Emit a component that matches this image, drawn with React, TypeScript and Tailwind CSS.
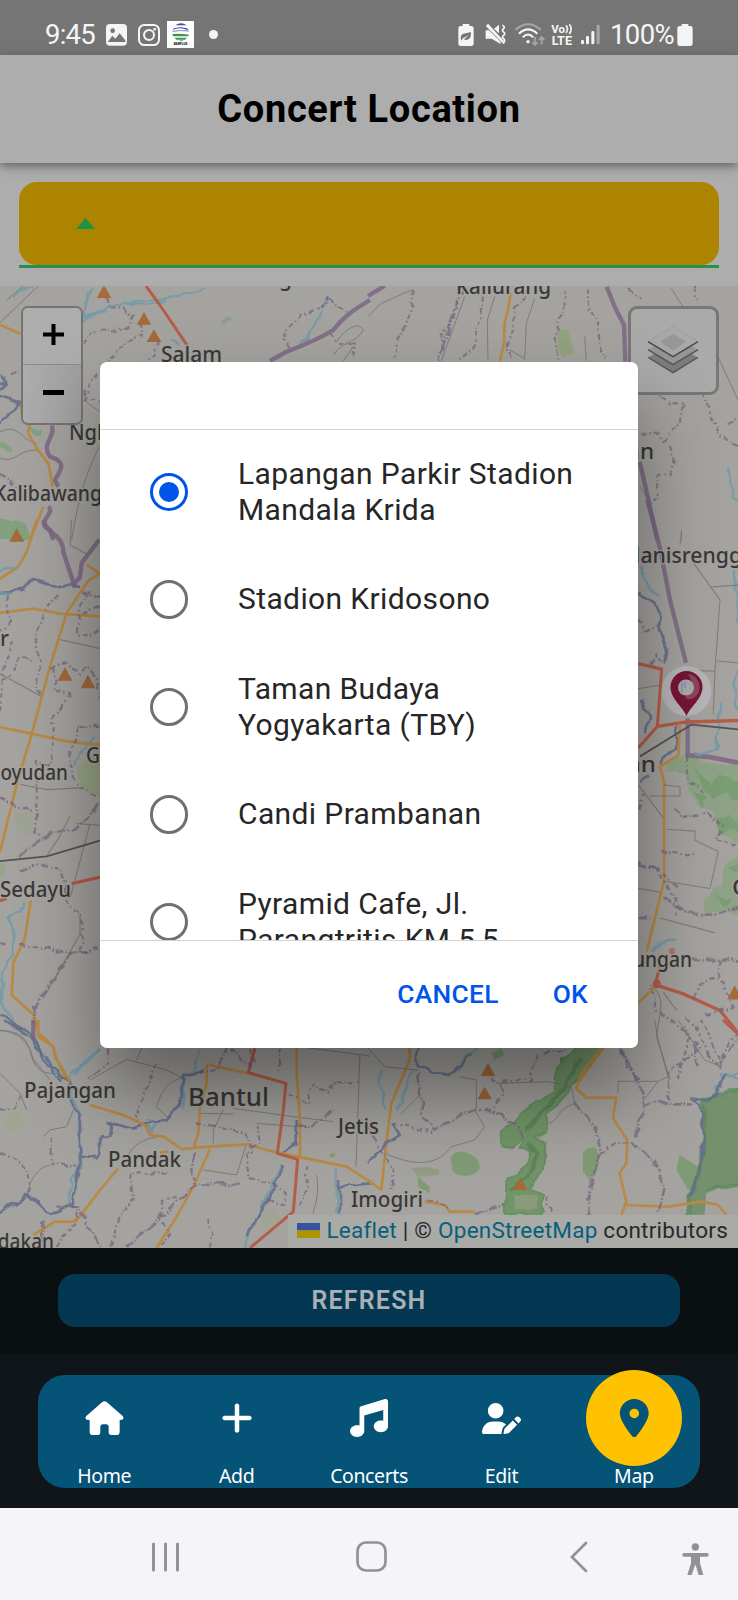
import React from "react";
import { FaMusic, FaPlus, FaUserPen, FaLocationDot } from "react-icons/fa6";

type Kind = "road" | "red" | "river" | "stream" | "edge" | "dash" | "wide" | "thin" | "rail";

const strokes: Record<Kind, { stroke: string; w: number; dash?: string; o?: number; wavy?: boolean }> = {
  road: { stroke: "#b98a45", w: 8 },
  red: { stroke: "#b65d49", w: 9 },
  river: { stroke: "#656f8c", w: 8, o: 0.9, wavy: true },
  stream: { stroke: "#6f9aa9", w: 7, o: 0.85, wavy: true },
  edge: { stroke: "#77637f", w: 8, dash: "26 6 5 6", o: 0.7, wavy: true },
  dash: { stroke: "#77647d", w: 6.5, dash: "16 8 5 8", o: 0.72, wavy: true },
  wide: { stroke: "#7d6784", w: 13, o: 0.85 },
  thin: { stroke: "#7b7876", w: 3, o: 0.9 },
  rail: { stroke: "#555351", w: 5 },
};

function Line({ k, d }: { k: Kind; d: string }) {
  const s = strokes[k];
  return (
    <path d={d} fill="none" stroke={s.stroke} strokeWidth={s.w} strokeDasharray={s.dash} opacity={s.o} strokeLinejoin="round" filter={s.wavy ? "url(#wavy)" : undefined} />
  );
}

function Peaks({ at }: { at: [number, number][] }) {
  return (
    <>
      {at.map(([x, y]) => (
        <path key={`${x}-${y}`} d={`M${x - 22} ${y + 18}L${x} ${y - 20}L${x + 22} ${y + 18}Z`} fill="#a5693a" />
      ))}
    </>
  );
}

function Label({ x, y, w, size = 22.5, children }: { x: number; y: number; w: number; size?: number; children: string }) {
  return (
    <text x={x} y={y} textLength={w} lengthAdjust="spacingAndGlyphs" fontSize={size} fontWeight="500" fill="#3a3938" stroke="#a6a4a0" strokeWidth="2.5" paintOrder="stroke" className="font-['Noto_Sans',sans-serif]">
      {children}
    </text>
  );
}

function MapCanvas() {
  return (
    <svg viewBox="0 286 738 962" className="block h-full w-full">
      <defs>
        <filter id="wavy" filterUnits="userSpaceOnUse" x="-20" y="-20" width="1160" height="1620">
          <feTurbulence type="fractalNoise" baseFrequency="0.03" numOctaves="1" seed="4" />
          <feDisplacementMap in="SourceGraphic" scale="26" xChannelSelector="R" yChannelSelector="G" />
        </filter>
      </defs>
      <rect y="286" width="738" height="962" fill="#a5a39f" />

      <g transform="translate(0 280) scale(.33333)">
        <path filter="url(#wavy)" d="M0 480L20 495L40 505L30 515L0 500ZM90 445L130 450L120 468L95 460ZM665 128L692 108L694 122L672 136ZM0 715L40 725L75 745L95 780L0 780Z" fill="#83a17c" />
        <Line k="thin" d="M0 128L115 18M70 18L20 60M0 455C60 430 60 480 110 490M0 535C50 550 50 510 110 510M297 500C270 560 240 620 215 780M250 360L300 395" />
        <Line k="stream" d="M40 50L60 30L100 22M275 22L255 75L250 110L320 82L380 70L440 62L520 52L620 26M370 70L440 74L500 62M250 130L265 110L320 90M508 178L538 194M965 95C940 160 920 170 900 200M990 50L960 90" />
        <Line k="road" d="M0 134L62 162M60 360L66 400M90 420L85 460L110 505L145 550L158 620M130 680L90 780" />
        <Line k="red" d="M438 18L470 62L500 105L564 200" />
        <Line k="wide" d="M1110 60C1060 90 1030 110 1000 150C960 175 900 200 860 215L810 243M155 436C170 470 120 490 150 530C195 545 190 560 165 600L175 620M145 680C170 700 100 730 150 750L160 780" />
        <Line k="river" d="M0 285L20 310L0 330M0 350L60 370L30 400L0 430M22 305L0 312" />
        <Line k="dash" d="M325 50L330 85L370 85L400 105L385 135L350 155L280 150L250 190M420 125L425 170L380 185L340 225L310 270L270 310L260 360M470 180L465 225L440 235M990 55L1010 80L1040 92M990 45L960 90L900 105L865 150L850 185L875 210M990 160L1010 185L1065 190L1060 230M30 290L60 270M0 580L30 600L50 620M250 330L265 355L300 365" />
        <Line k="thin" d="M1010 185C1050 130 1080 130 1090 150C1070 190 1030 180 1000 225M1060 200L1030 243" />
        <Peaks at={[[312, 36], [432, 116], [462, 168], [50, 765]]} />
      </g>

      <g transform="translate(368 280) scale(.33333)">
        <path d="M568 150L600 150L618 218L585 232L570 210Z" fill="#8da277" opacity=".8" />
        <Line k="wide" d="M0 48L50 18M716 20L740 80L768 135L772 245M815 545L830 610L850 700L868 780" />
        <Line k="road" d="M428 40L420 90L410 130L408 190L396 243" />
        <Line k="dash" d="M135 30L128 90L110 150L88 180L80 243M285 30L265 80L260 110L225 160L215 243M345 50L340 110L320 150L320 200L270 243M475 50L445 80L435 130L420 210L430 243M590 30L590 70L570 120L560 180L575 240M660 25L660 80L690 130L695 200L710 240M780 30L820 60M980 20L990 60M820 465L870 460L890 480L935 430L945 370L905 370L870 340M905 500L920 540L910 580L870 590L865 650L850 670M1000 340L1015 380L1050 460L1110 500M1080 430L1110 410" />
        <Line k="edge" d="M268 60L215 235" />
        <Line k="thin" d="M0 110L40 70L130 30M290 50L250 160L220 243M380 50L358 120L360 243M500 55L475 130L470 240M425 210L470 235M650 170L655 243M910 25L945 80M1050 230L1110 360M815 620L850 670M940 750V780" />
        <Line k="stream" d="M1080 570L1090 620L1108 665" />
      </g>

      <g transform="translate(0 520) scale(.33333 .35714)">
        <path filter="url(#wavy)" d="M0 0L70 10L85 40L40 60L0 35Z" fill="#83a17c" />
        <path filter="url(#wavy)" d="M0 960L20 962L15 990L0 1000ZM230 690L300 650V770L240 750Z" fill="#98a487" />
        <path filter="url(#wavy)" d="M40 820L100 825L95 880L50 870Z" fill="#98a487" opacity=".4" />
        <Line k="road" d="M110 0L80 90L55 130L0 165M300 150L265 170L200 260L150 410L95 600L50 740L0 930M0 260L100 248L180 262L300 270M0 580L95 598L190 618L300 630M260 125L300 150M92 1065L75 1170L40 1240L35 1330L100 1385L115 1435L160 1475L170 1510L200 1568" />
        <Line k="red" d="M215 1018L300 1000M0 1066L20 1060" />
        <Line k="river" d="M0 205L70 195L100 165L180 185L240 190M0 1380L60 1420L95 1445L150 1530L180 1568" />
        <Line k="stream" d="M0 145L50 130M70 1070L60 1100L25 1110L40 1150L40 1200L10 1270L0 1350L50 1410M300 1480L220 1550M0 205L35 208M290 605L245 645L220 690" />
        <Line k="wide" d="M130 0C140 40 190 40 190 90L215 160L225 190M298 55L245 120L240 160L215 185" />
        <Line k="dash" d="M180 210L130 260L105 330L120 400L110 460L120 500M60 380L30 440L0 450M20 210L30 290L0 310M270 200L240 240L230 320L280 325L300 300M70 380L100 400M150 410L200 400L240 430L260 410L285 440L300 500M160 410L165 480L210 490L160 560L150 690L110 680L110 780L105 870L130 890M240 580L300 575M240 580L210 640L215 720L240 750L300 775M0 780L95 820M60 990L110 960L190 985L200 1070L240 1100L250 1180L235 1210M60 1190L140 1200L240 1215L300 1200M20 1190L0 1190M40 340L10 420L0 540M250 200L300 215M250 260L300 240" />
        <Line k="edge" d="M60 940L150 880L240 860L300 790M100 1370L150 1300L210 1215L270 1210M100 1360L100 1410" />
        <Line k="thin" d="M215 0L210 70L260 95M180 335L300 360M0 430L125 495M60 740L140 755L240 750M270 850L210 1060M210 830L170 900L140 940M230 850L300 855M240 1110V1160L130 1340M0 1430C50 1430 80 1440 100 1510L150 1568" />
        <Line k="rail" d="M0 955L140 942L300 898" />
        <Peaks at={[[50, 43], [195, 432], [264, 453]]} />
      </g>

      <g transform="translate(560 500) scale(.33333 .36995)">
        <path filter="url(#wavy)" d="M330 700L400 690L440 710L550 720V930L520 920L480 895L455 840L420 830L395 800L385 750L320 730ZM550 960L490 980L490 1040L460 1050L440 1080L420 1130L460 1110L550 1120Z" fill="#8aa382" opacity=".85" />
        <path filter="url(#wavy)" d="M400 720L450 770L480 740L550 770V830L500 790L460 810L430 780ZM400 790L440 800L430 830ZM470 860L510 850L550 890L480 900ZM500 990L540 980L530 1010ZM460 1070L520 1080L500 1100Z" fill="#719b6b" opacity=".65" />
        <path filter="url(#wavy)" d="M0 1510L60 1480L120 1490L50 1568H0Z" fill="#66865c" />
        <Line k="wide" d="M262 0L300 130L330 270L355 360L378 440M383 590V690L450 695L534 710" />
        <Line k="stream" d="M240 180L270 240L300 260M515 180L534 260V350M534 460L520 500L534 570M485 545L470 640L470 680L400 690M345 1185L310 1195L275 1220M534 1550L485 1555L490 1568" />
        <Line k="river" d="M235 250L295 290L300 350L325 400L310 445M240 540L270 590L255 625M350 610L345 670L300 710M240 765L270 745" />
        <Line k="red" d="M235 442L305 457L292 612L235 670M292 612L380 600L534 596M300 1260L285 1310L370 1335L480 1380L534 1440" />
        <Line k="road" d="M360 605L355 690L300 720L312 760L312 1030L290 1110L260 1220M130 1480L60 1568" />
        <Line k="rail" d="M240 693L395 607L534 620" />
        <Line k="thin" d="M365 90L360 120M400 170L480 270L465 460L460 580M455 235L534 230M470 435L534 440M235 510L300 500M380 460L465 463M320 890L405 895V920L475 950L450 1050L310 1030M235 770L310 860M235 1050L300 1060M310 770L360 775V800H270M300 1130L465 1170M270 1310C330 1350 290 1400 290 1450L330 1568M310 1330L350 1380" />
        <Line k="dash" d="M235 320L260 350L300 335M270 440L290 420L305 440M345 830L360 860L440 850L490 880L470 920L534 930M300 955L410 955M235 980L290 1000L345 1080L350 1120M310 1010L350 1050M275 1320L290 1380L340 1410L390 1450L350 1568M380 1400L420 1440L440 1500L480 1530L534 1450M440 1390L520 1370L490 1310L470 1290L420 1310L400 1350M475 1240V1290M380 690L390 760L430 790M235 840L250 800" />
        <Line k="edge" d="M235 990L300 1000M310 1080L400 1120L480 1118L534 1100M235 1130L270 1130M395 1240L534 1242M180 1480L235 1568M400 1470L420 1540" />
        <Line k="road" d="M235 1360L285 1315" />
        <circle cx="290" cy="1308" r="12" fill="#b65d49" />
        <circle cx="336" cy="1220" r="9" fill="#b0766a" />
        <Peaks at={[[524, 1332]]} />
      </g>

      <g transform="translate(0 1020) scale(.33333)">
        <path filter="url(#wavy)" d="M10 290L60 270L70 320L20 340ZM780 590L830 560L840 600L790 640Z" fill="#9fa78e" opacity=".7" />
        <Line k="thin" d="M0 30C50 40 70 50 90 90C100 150 130 160 160 160M0 160L60 220L80 270M270 180L380 118L500 150L560 180M410 120L425 84M500 290L470 260C490 190 520 180 570 165M80 530C90 470 120 440 150 435M130 350L150 330L200 320L220 270M640 370V330L670 270M610 450L710 465L740 370M700 265L880 290L1000 305M600 280L700 282M380 415C400 370 430 360 470 350M950 465C960 540 940 560 940 580M925 84L1110 108M770 310L900 320M1080 100L1068 440" />
        <Line k="stream" d="M300 85L240 140L205 180L235 280L245 440L215 480L205 550M440 300L470 310L450 335L430 310M600 84L580 150L550 180L550 260M850 430L800 530L730 684M1010 440V580M130 100L170 170" />
        <Line k="river" d="M15 0L100 60L130 120L205 190L220 260L240 300L240 430L215 550L150 585L85 525L0 580M240 410L290 415C310 390 290 360 310 345C330 360 350 310 320 310C380 310 390 340 430 315L500 300L540 250L550 170L610 150M855 430L820 510L740 650M1015 500L1110 490M850 390L890 370V300M1020 480V580" />
        <Line k="wide" d="M100 0L100 60" />
        <Line k="road" d="M115 0V50L160 80L165 110L210 184M270 255L370 285L435 315L450 345L490 350L545 387L630 380L740 373L820 395L1040 440L1110 485M620 135L620 190L600 260L595 340L580 387M620 133L745 160M890 84V160L900 300L900 410M630 387L580 500L530 590L470 684M355 445L300 510L240 590L220 605L165 605L100 645M480 398L505 395" />
        <Line k="red" d="M765 84L745 158L858 190L850 270L832 400L893 418L880 575L750 684" />
        <Line k="dash" d="M325 85L320 130L260 180M470 130L430 230L405 290L415 300M680 84L650 150L560 165L540 180M155 350V430L230 440M0 400L75 440L90 530M0 268H40L60 230M390 460L400 540L360 590L330 684M500 460L390 460M690 84L760 150M770 310L780 370L740 400L745 470L820 490L855 520L850 550L800 540M590 310L660 320L740 340L760 400M530 530L490 540L480 600L510 640L480 684M620 600L640 640L625 680M920 440L925 510L900 560M840 84V150M750 84L765 130M870 220L920 250L940 190L980 220L1010 180L1080 190M170 560L225 560L235 590L170 684" />
        <Line k="edge" d="M380 684L560 520L590 490L720 495M580 400V490M895 320L940 320L1000 270M130 600L130 684M210 560L235 560L300 684" />
        <path d="M990 402L1005 398L1004 412L990 412Z" fill="#7f9f68" />
      </g>

      <g transform="translate(368 1020) scale(.33333)">
        <g filter="url(#wavy)" strokeLinejoin="round">
          <path d="M630 84H700L670 130L640 160L610 200L580 240L540 280L540 330L505 350L535 370L530 430L505 470L490 510L525 520V570L500 584H410L415 490L480 430L490 390L455 390L465 350L435 390L400 375L398 335L440 310L460 280L510 240L560 220V150Z" fill="#729568" stroke="#66905f" strokeWidth="6" />
          <path d="M640 110L590 200L540 260L470 330M480 370L510 400L480 470L430 510" fill="none" stroke="#547b53" strokeWidth="12" opacity=".6" />
          <path d="M440 525L505 525L510 565L440 570Z" fill="#8a9b7d" />
        </g>
        <path d="M248 415Q255 390 290 397Q330 408 335 435Q335 466 290 467Q250 464 252 440ZM645 400Q660 375 685 385L695 410L683 465L660 475L645 455ZM935 405L990 440L985 500L960 510L925 450ZM370 100L400 84L410 105L380 120ZM150 470L185 500V520L150 500Z" fill="#7f9b75" />
        <path d="M130 445L180 440L215 450L210 465L150 470Z" fill="#939d83" />
        <path d="M1110 205L1060 225L1005 235L1000 300L1010 350L990 470L960 530L965 584H1010L1015 510L1110 495Z" fill="#75906d" />
        <path d="M1005 235L1010 350L990 470L960 530L965 584M1015 510L1110 495M1000 240L1060 225L1110 208" fill="none" stroke="#5f8a5c" strokeWidth="12" opacity=".8" filter="url(#wavy)" />
        <Line k="road" d="M125 84V120L70 250L55 370L40 510M0 480L40 510M700 84L640 160L625 205L655 233H745L735 295L778 360L775 430L755 460L775 545L760 584M775 555L900 560L1000 545L1050 555L1075 584M170 545L230 555L245 575L320 575" />
        <Line k="stream" d="M35 150V190L50 270M130 150L90 270M1065 200L1045 195V225M1070 165L1110 175M330 84L290 110L270 150" />
        <Line k="red" d="M1065 0L1108 40" />
        <Line k="river" d="M150 84V140L230 165L260 150L310 100M75 310L95 345L60 365L0 430M1000 240L970 235L995 255L1010 350L990 470L960 530M1070 165L1045 230L1000 240" />
        <Line k="edge" d="M150 160L160 230L165 290L195 330L240 305L320 270L370 270L430 310L470 350M825 250H970M755 84L810 190L830 250L800 350M620 250L680 320L700 400L670 470L660 584M790 370L860 420L890 500L870 584M320 580L410 555" />
        <Line k="dash" d="M75 310L130 320L190 340M510 100L485 180L400 185L405 220L375 280M530 100L600 84M700 400L740 370L790 370M900 240L905 150L1000 84L940 20M1060 150V110L1110 40M1000 0L1060 130M370 170L400 200M0 320L60 430L75 440L70 510M535 530L550 584M180 535L240 560" />
        <Line k="thin" d="M0 84L50 140L150 150M100 280L155 225M320 270L350 320L320 360L250 380C200 450 120 430 50 400M390 190L540 185L610 200L620 250C560 270 580 300 540 310M820 250L870 184L750 184V220M860 0L870 60L900 170L870 184M930 0L1010 120L1060 140M275 170L325 180V270M530 380V430" />
        <Peaks at={[[360, 150], [350, 220], [457, 492]]} />
      </g>

      <Label x={279} y={286} w={13}>g</Label>
      <Label x={456} y={294} w={95}>Kaliurang</Label>
      <Label x={161} y={362} w={61}>Salam</Label>
      <Label x={69} y={440} w={46}>Nglu</Label>
      <Label x={-6} y={501} w={108}>Kalibawang</Label>
      <Label x={627} y={459} w={27}>an</Label>
      <Label x={621} y={563} w={134}>Manisrenggo</Label>
      <Label x={0} y={646} w={9}>r</Label>
      <Label x={86} y={763} w={14}>G</Label>
      <Label x={-17} y={780} w={85}>Moyudan</Label>
      <Label x={0} y={897} w={71}>Sedayu</Label>
      <Label x={627} y={772} w={29}>an</Label>
      <Label x={633} y={967} w={59}>ungan</Label>
      <Label x={732} y={895} w={15}>C</Label>
      <Label x={24} y={1098} w={92}>Pajangan</Label>
      <Label x={188} y={1106} w={81} size={26}>Bantul</Label>
      <Label x={338} y={1134} w={41}>Jetis</Label>
      <Label x={108} y={1167} w={73}>Pandak</Label>
      <Label x={351} y={1207} w={72}>Imogiri</Label>
      <Label x={-17} y={1249} w={71}>Ndakan</Label>

      <circle cx="686.5" cy="691" r="25" fill="#b8b7bb" opacity=".85" />
      <path d="M686.5 716C683 707 670.500 699 670.500 687a16 16 0 0 1 32 0C702.500 699 690 707 686.500 716Z" fill="#771535" />
      <path d="M688 674C699 675 702 688 697 695C694 699 688 701 685 697Q697 688 688 674Z" fill="#8d4658" />
      <circle cx="686" cy="687.500" r="8" fill="#a9aaaf" />
      <path d="M682 682v11M685 681v7" stroke="#8294a5" strokeWidth="1.500" />
    </svg>
  );
}

function StatusBar() {
  return (
    <header className="flex h-[55px] shrink-0 items-center bg-[#757575] pt-[14px] pr-[44px] pl-[45px] text-[#f5f5f5]">
      <span className="w-[61px] text-[27.500px] leading-none tracking-[-0.8px]">9:45</span>
      <svg width="21" height="22" viewBox="0 0 63 66" className="shrink-0">
        <rect width="63" height="65" rx="12" fill="currentColor" />
        <path d="M5 54L19 35L28 44L41 28L58 49V54Z" fill="#757575" />
        <circle cx="20" cy="20" r="7" fill="#757575" />
      </svg>
      <svg width="22" height="22" viewBox="0 0 66 66" className="ml-[11px] shrink-0" fill="none" stroke="currentColor" strokeWidth="6">
        <rect x="3" y="3" width="60" height="60" rx="16" />
        <circle cx="33" cy="33" r="15" />
        <circle cx="50" cy="16" r="4" fill="currentColor" stroke="none" />
      </svg>
      <svg width="27" height="27" viewBox="0 0 81 81" className="ml-[7px] shrink-0">
        <rect width="81" height="81" fill="#fff" />
        <path d="M25 13Q42 0 59 13Z M18 23Q40 14 63 23L62 28Q40 16 18 26Z" fill="#3d4aa0" />
        <path d="M16 31Q40 27 66 30" stroke="#3d4aa0" strokeWidth="2" fill="none" />
        <path d="M16 39Q40 36 66 41L63 46H18ZM22 50H60L54 56H28ZM36 58H50L43 61Z" fill="#439452" />
        <text x="20" y="72" fontSize="12" fontWeight="900" textLength="41" lengthAdjust="spacingAndGlyphs" fill="#111">BANPLUS</text>
      </svg>
      <span className="ml-[15px] size-[9px] rounded-full bg-current" />
      <div className="ml-auto flex items-center">
        <svg width="16" height="22" viewBox="0 0 48 66">
          <path d="M14 6V0H34V6H40Q47 6 47 14V58Q47 66 40 66H8Q1 66 1 58V14Q1 6 8 6Z" fill="currentColor" />
          <path d="M9 50Q4 28 24 28L39 24Q40 48 23 48L18 46L34 32L15 43Z" fill="#757575" />
        </svg>
        <svg width="21" height="21" viewBox="0 0 63 63" className="ml-[11px]" fill="currentColor">
          <path d="M2 19H12L47 53V60L20 44H2ZM27 14L42 2V28ZM5 2L10 0L60 55L56 60L3 7Z" />
          <path d="M52 4Q62 8 55 15Q49 20 57 25Q62 29 55 35Q49 40 57 45Q62 50 54 58" fill="none" stroke="currentColor" strokeWidth="5" />
        </svg>
        <svg width="31" height="24" viewBox="0 0 93 72" className="ml-[9px]" fill="none" stroke="currentColor" strokeWidth="6">
          <path d="M2 20Q39 -13 77 20" opacity=".4" />
          <path d="M12 32Q39 6 67 32M23 43Q39 26 55 43" />
          <circle cx="39" cy="56" r="5" fill="currentColor" stroke="none" />
          <path d="M60 42V65M52 57L60 66L68 57M80 65V44M72 51L80 42L88 51" opacity=".4" strokeWidth="5" />
        </svg>
        <svg width="22" height="23" viewBox="0 0 66 69" className="ml-[5px]" fill="currentColor" fontWeight="700">
          <text x="1" y="31" fontSize="33" textLength="41" lengthAdjust="spacingAndGlyphs">Vo</text>
          <path d="M45 7Q54 17 45 30M55 4Q66 17 55 33" fill="none" stroke="currentColor" strokeWidth="5" />
          <text x="2" y="67" fontSize="38" textLength="61" lengthAdjust="spacingAndGlyphs">LTE</text>
        </svg>
        <svg width="19" height="21" viewBox="0 0 57 63" className="ml-[8px]" fill="currentColor">
          <rect x="0" y="48" width="9" height="13" rx="4" />
          <rect x="15" y="36" width="9" height="25" rx="4" />
          <rect x="31" y="21" width="9" height="40" rx="4" />
          <rect x="47" y="2" width="9" height="59" rx="4" opacity=".4" />
        </svg>
        <span className="ml-[10px] w-[66px] text-[27.500px] leading-none tracking-[-0.600px]">100%</span>
        <svg width="16" height="22" viewBox="0 0 48 66" className="mr-[1px] ml-[1px]">
          <path d="M14 6V0H34V6H40Q47 6 47 14V58Q47 66 40 66H8Q1 66 1 58V14Q1 6 8 6Z" fill="currentColor" />
        </svg>
      </div>
    </header>
  );
}

function MapView() {
  return (
    <section className="relative h-[962px] shrink-0 overflow-hidden">
      <MapCanvas />
      <div className="absolute top-[20px] left-[21px] w-[62px] rounded-[7px] border-2 border-[#757472]">
        <div className="flex h-[57px] items-center justify-center rounded-t-[5px] border-b border-[#8b8b8b] bg-[#adadad] pb-[3px] pl-[3px]">
          <svg width="21" height="21" viewBox="0 0 21 21"><path d="M8.500 0h4v8.500H21v4h-8.500V21h-4v-8.500H0v-4h8.500Z" /></svg>
        </div>
        <div className="flex h-[58px] items-center justify-center rounded-b-[5px] bg-linear-to-r from-[#adadad] to-[#a0a0a0] pb-[3px] pl-[3px]">
          <svg width="21" height="5" viewBox="0 0 21 5"><path d="M0 0h21v5H0Z" /></svg>
        </div>
      </div>
      <div className="absolute top-[20px] right-[19px] flex h-[89px] w-[91px] items-center justify-center rounded-[9px] border-[3px] border-[#787775] bg-[#aaaaaa] pr-[2px] pb-[3px]">
        <svg width="50" height="49" viewBox="0 0 150 147">
          <path d="M0 98L75 52L150 98L75 145Z" fill="#7d7d7d" />
          <path d="M0 97L75 143L150 97" fill="none" stroke="#565656" strokeWidth="4" />
          <path d="M0 74L75 30L150 74L75 119Z" fill="#969696" />
          <path d="M0 74L75 119L150 74" fill="none" stroke="#565656" strokeWidth="4" />
          <path d="M0 50L75 3L150 50L75 95Z" fill="#a8a8a8" stroke="#999" strokeWidth="2" />
          <path d="M37 50L75 27L113 50L75 77Z" fill="#979797" />
          <path d="M0 50L75 95L150 50" fill="none" stroke="#494949" strokeWidth="4" />
        </svg>
      </div>
      <div className="absolute right-0 bottom-0 flex h-[33px] w-[450px] items-center justify-end bg-[#aaaaa7] pr-[10px] pb-[2px] text-[22.500px] tracking-[0.24px] whitespace-nowrap text-[#292929]">
        <svg width="23" height="15" viewBox="0 0 23 15" className="mr-[6px]"><path fill="#3854a0" d="M0 0h23v7.500H0z" /><path fill="#b09300" d="M0 7.500h23V15H0z" /></svg>
        <span><span className="text-[#075f7c]">Leaflet</span> | © <span className="text-[#075f7c]">OpenStreetMap</span> contributors</span>
      </div>
    </section>
  );
}

const venues = [
  ["Lapangan Parkir Stadion", "Mandala Krida"],
  ["Stadion Kridosono"],
  ["Taman Budaya", "Yogyakarta (TBY)"],
  ["Candi Prambanan"],
  ["Pyramid Cafe, Jl.", "Parangtritis KM 5,5"],
];

function VenueDialog() {
  return (
    <div className="absolute inset-x-0 top-[362px] flex justify-center">
      <div role="dialog" className="flex h-[686px] w-[538px] flex-col overflow-hidden rounded-[7px] bg-white shadow-[0_45px_80px_rgba(0,0,0,0.42)]">
        <div className="h-[68px] shrink-0 border-b border-[#d3d3d3]" />
        <div className="h-[510px] shrink-0 overflow-hidden pt-[8px]">
          {venues.map((lines, i) => (
            <label key={lines[0]} className="flex h-[107.500px] items-center pl-[49.500px]">
              <span className={`flex size-[38.500px] shrink-0 items-center justify-center rounded-full border-[3.500px] ${i === 0 ? "border-[#0054e9]" : "border-[#707070]"}`}>
                {i === 0 && <span className="size-[19.500px] rounded-full bg-[#0054e9]" />}
              </span>
              <span className="ml-[50px] text-[30px] leading-[36px] tracking-[0.38px] whitespace-nowrap text-[#262626]">
                {lines.map((line) => <span key={line} className="block">{line}</span>)}
              </span>
            </label>
          ))}
        </div>
        <div className="flex flex-1 items-center justify-end gap-[54px] border-t border-[#d3d3d3] pr-[50px] text-[26.300px] font-medium tracking-[0.3px] text-[#0054e9]">
          <button>CANCEL</button>
          <button>OK</button>
        </div>
      </div>
    </div>
  );
}

function HomeGlyph() {
  return (
    <svg width="39" height="34" viewBox="0 0 117 102" fill="currentColor">
      <path d="M52 3Q58 -2 65 3L113 45Q117 50 114 55Q112 57 104 57V92Q104 102 94 102H79Q71 102 71 94V78Q71 70 63 70H54Q46 70 46 78V94Q46 102 38 102H23Q14 102 14 92V57Q4 57 2 54Q0 49 4 45Z" />
    </svg>
  );
}

const tabs = [
  { label: "Home", icon: <HomeGlyph /> },
  { label: "Add", icon: <FaPlus size={36} /> },
  { label: "Concerts", icon: <FaMusic size={38} /> },
  { label: "Edit", icon: <FaUserPen size={39} /> },
  { label: "Map", icon: <FaLocationDot size={38.5} /> },
];

function TabBar() {
  return (
    <nav className="flex h-[154px] shrink-0 justify-center bg-[#101519] pt-[21px]">
      <div className="flex h-[113px] w-[662px] rounded-[27px] bg-[#055377] text-white">
        {tabs.map((tab, i) => (
          <div key={tab.label} className="flex flex-1 flex-col items-center">
            <div className={`-mt-[5px] flex size-[96px] shrink-0 items-center justify-center rounded-full ${i === 4 ? "bg-[#ffc200] text-[#055377]" : ""}`}>{tab.icon}</div>
            <span className="-mt-[1px] font-['Noto_Sans',sans-serif] text-[19.500px] leading-[22px] tracking-[-0.400px]">{tab.label}</span>
          </div>
        ))}
      </div>
    </nav>
  );
}

function SystemNav() {
  return (
    <footer className="flex h-[92px] shrink-0 items-center bg-[#f5f5f8] pt-[5px] pl-[151px] text-[#929294]">
      <svg width="29" height="30" viewBox="0 0 29 30" stroke="currentColor" strokeWidth="3" strokeLinecap="round"><path d="M2.500 2v26M14.500 2v26M26.500 2v26" /></svg>
      <svg width="31" height="31" viewBox="0 0 31 31" className="ml-[176px]" fill="none" stroke="currentColor" strokeWidth="2.700"><rect x="1.500" y="1.500" width="28" height="28" rx="8.500" /></svg>
      <svg width="18" height="32" viewBox="0 0 18 32" className="ml-[183px]" fill="none" stroke="currentColor" strokeWidth="2.700" strokeLinecap="round"><path d="M16 2L2 16L16 30" /></svg>
      <svg width="27" height="33" viewBox="0 0 81 99" className="mt-[6px] ml-[94px]" fill="currentColor">
        <circle cx="40" cy="12" r="11" />
        <path d="M6 30H75Q80 30 80 36Q80 41 75 41H54V60L64 96H50L41 67H39L29 96H16L27 60V41H6Q1 41 1 36Q1 30 6 30Z" />
      </svg>
    </footer>
  );
}

export default function App() {
  return (
    <main className="relative flex h-[1600px] w-[738px] flex-col overflow-hidden bg-[#adadad] font-[Roboto,sans-serif]">
      <StatusBar />
      <div className="z-10 flex h-[108px] shrink-0 items-center justify-center bg-[#adadad] text-[38px] font-bold tracking-[0.65px] text-black shadow-[0_4px_8px_-1px_rgba(0,0,0,0.35),0_2px_16px_rgba(0,0,0,0.14)]">
        <h1>Concert Location</h1>
      </div>
      <div className="h-[123px] shrink-0 px-[19px] pt-[19px]">
        <div className="border-b-[3px] border-[#27904a]">
          <div className="flex h-[83px] items-center rounded-[18px] bg-[#ad8400] pl-[57px]">
            <svg width="19" height="11" viewBox="0 0 19 11"><path d="M0 11L9.500 0L19 11Z" fill="#1c9444" /></svg>
          </div>
        </div>
      </div>
      <MapView />
      <div className="flex h-[106px] shrink-0 justify-center bg-[#0a0f12] pt-[26px]">
        <button className="h-[53px] w-[622px] rounded-[17px] bg-[#043852] text-[25px] font-semibold tracking-[1.200px] text-[#abb0b4]">REFRESH</button>
      </div>
      <TabBar />
      <SystemNav />
      <VenueDialog />
    </main>
  );
}
